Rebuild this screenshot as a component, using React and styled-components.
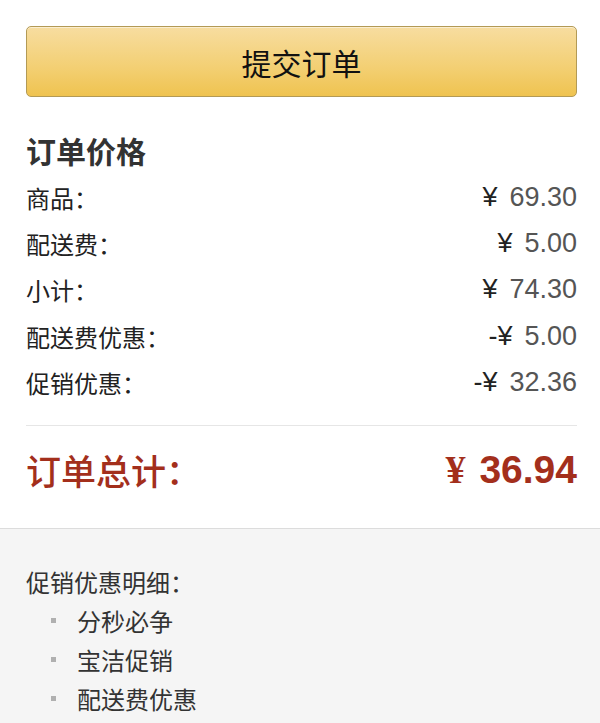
import styled, { createGlobalStyle } from 'styled-components';

const GlobalStyle = createGlobalStyle`
  html, body {
    margin: 0;
    padding: 0;
    background: #fff;
  }
  body {
    font-family: "Noto Sans CJK SC", "Liberation Sans", sans-serif;
    color: #222;
  }
`;

const Page = styled.div`
  width: 600px;
`;

const Summary = styled.div`
  padding: 26px 23px 0 26px;
`;

const SubmitButton = styled.button`
  display: block;
  width: 100%;
  height: 71px;
  border: 1px solid #b39a55;
  border-radius: 5px;
  background: linear-gradient(to bottom, #f7dda0 0%, #f3cf72 60%, #efc350 100%);
  box-shadow: inset 0 1px 0 rgba(255, 255, 255, 0.5);
  font-family: "Noto Sans CJK SC", sans-serif;
  font-size: 30px;
  color: #111;
  cursor: pointer;
  padding: 0;
`;

const Title = styled.h3`
  margin: 30px 0 0;
  font-size: 30px;
  line-height: 47px;
  font-weight: 700;
  color: #333;
`;

const Row = styled.div`
  display: flex;
  justify-content: space-between;
  align-items: center;
  height: 46.3px;
`;

const Label = styled.span`
  font-size: 24px;
  color: #222;
`;

const Amount = styled.span`
  font-family: "Liberation Sans", Arial, sans-serif;
  font-size: 27px;
  color: #555;
`;

const Yen = styled.span`
  color: #222;
  margin-right: 12px;
`;

const Divider = styled.hr`
  margin: 20px 0 0;
  border: 0;
  border-top: 1px solid #e6e6e6;
`;

const TotalRow = styled.div`
  display: flex;
  justify-content: space-between;
  align-items: center;
  height: 50px;
  padding: 18px 0 34px;
  color: #a32f1c;
`;

const TotalLabel = styled.span`
  font-size: 35px;
  font-weight: 500;
`;

const TotalAmount = styled.span`
  font-family: "Liberation Sans", Arial, sans-serif;
  font-size: 39px;
  font-weight: 700;
`;

const TotalYen = styled.span`
  font-family: "Liberation Serif", serif;
  font-size: 40px;
  font-weight: 700;
  margin-right: 14px;
`;

const Details = styled.div`
  background: #f5f5f5;
  border-top: 1px solid #dcdcdc;
  padding: 33px 26px 10px;
  min-height: 160px;
`;

const DetailsTitle = styled.div`
  font-size: 24px;
  line-height: 39px;
  color: #333;
`;

const List = styled.ul`
  list-style: none;
  margin: 0;
  padding: 0 0 0 25px;
`;

const Item = styled.li`
  display: flex;
  align-items: center;
  font-size: 24px;
  line-height: 39px;
  color: #333;
  &::before {
    content: '';
    width: 5px;
    height: 5px;
    background: #b0b0b0;
    margin-right: 21px;
  }
`;

const rows = [
  ['商品：', '¥', '69.30'],
  ['配送费：', '¥', '5.00'],
  ['小计：', '¥', '74.30'],
  ['配送费优惠：', '-¥', '5.00'],
  ['促销优惠：', '-¥', '32.36'],
];

const promos = ['分秒必争', '宝洁促销', '配送费优惠'];

export default function App() {
  return (
    <Page>
      <GlobalStyle />
      <Summary>
        <SubmitButton>提交订单</SubmitButton>
        <Title>订单价格</Title>
        {rows.map(([label, yen, value]) => (
          <Row key={label}>
            <Label>{label}</Label>
            <Amount>
              <Yen>{yen}</Yen>
              {value}
            </Amount>
          </Row>
        ))}
        <Divider />
        <TotalRow>
          <TotalLabel>订单总计：</TotalLabel>
          <TotalAmount>
            <TotalYen>¥</TotalYen>
            36.94
          </TotalAmount>
        </TotalRow>
      </Summary>
      <Details>
        <DetailsTitle>促销优惠明细：</DetailsTitle>
        <List>
          {promos.map((p) => (
            <Item key={p}>{p}</Item>
          ))}
        </List>
      </Details>
    </Page>
  );
}
